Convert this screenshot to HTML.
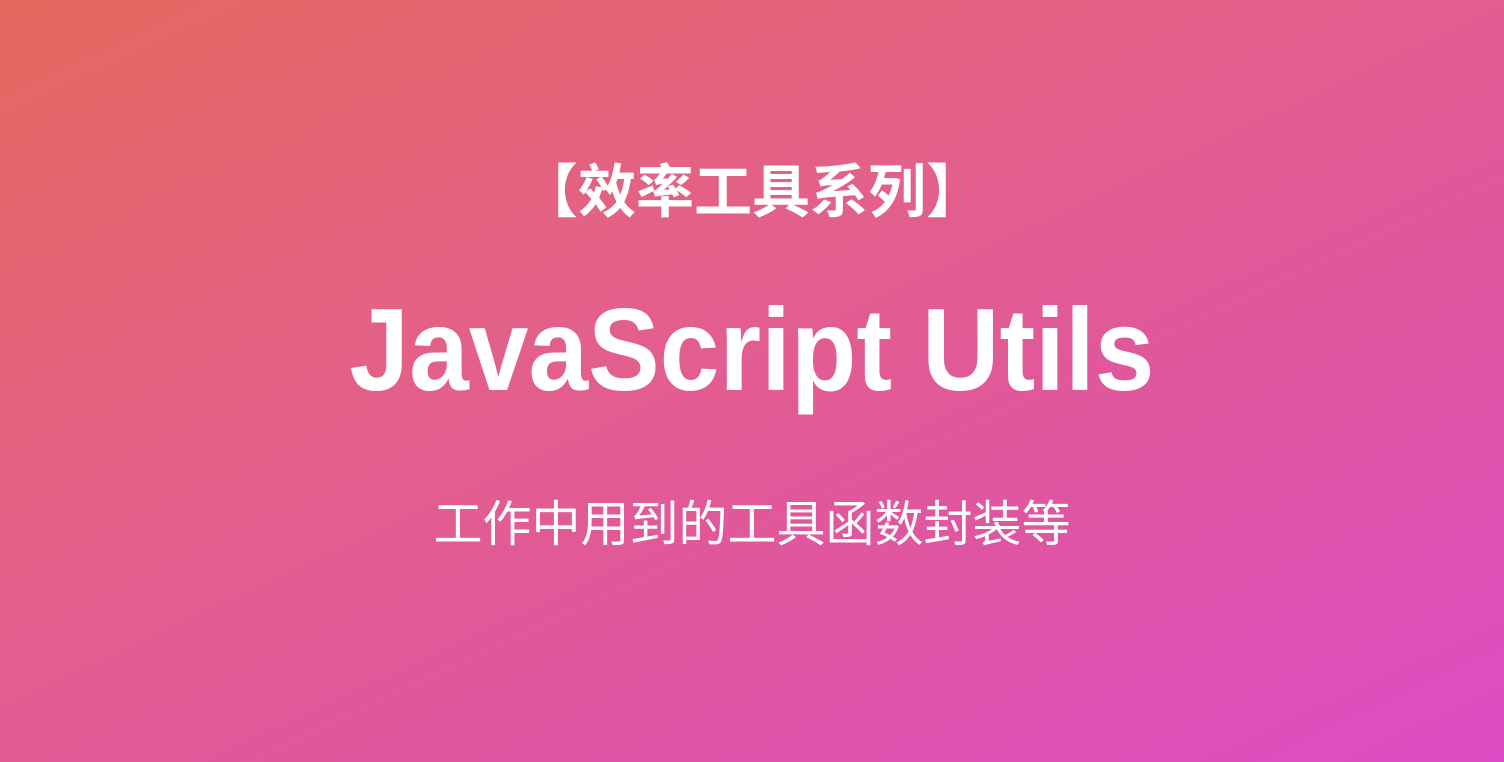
<!DOCTYPE html>
<html><head><meta charset="utf-8"><style>
html,body{margin:0;padding:0;}
body{width:1504px;height:762px;overflow:hidden;position:relative;
background:linear-gradient(155deg,#e6695f 0%,#e3608a 40%,#e0569f 65%,#dd4cc4 100%);
font-family:"Liberation Sans","Noto Sans CJK SC",sans-serif;color:#fff;}
.t{position:absolute;left:0;width:1504px;text-align:center;white-space:nowrap;}
#a{top:158px;font-size:58px;font-weight:bold;line-height:70px;}
#b{top:285px;font-size:117px;font-weight:bold;line-height:130px;}
#b span{display:inline-block;transform:scaleX(0.917);}
#c{top:495px;font-size:49px;line-height:60px;}
</style></head><body>
<div class="t" id="a">【效率工具系列】</div>
<div class="t" id="b"><span>JavaScript Utils</span></div>
<div class="t" id="c">工作中用到的工具函数封装等</div>
</body></html>
